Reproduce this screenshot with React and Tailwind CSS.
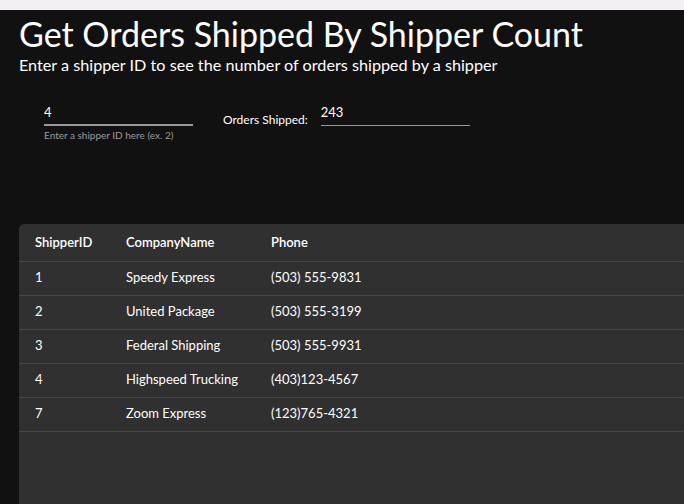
import React, { useState } from 'react';

const shippers = [
  { id: 1, name: 'Speedy Express', phone: '(503) 555-9831' },
  { id: 2, name: 'United Package', phone: '(503) 555-3199' },
  { id: 3, name: 'Federal Shipping', phone: '(503) 555-9931' },
  { id: 4, name: 'Highspeed Trucking', phone: '(403)123-4567' },
  { id: 7, name: 'Zoom Express', phone: '(123)765-4321' },
];

export default function App() {
  const [shipperId, setShipperId] = useState('4');

  return (
    <div className="h-[504px] w-[684px] overflow-hidden flex flex-col bg-[#111111] text-white font-['Lato','Open_Sans',sans-serif]">
      {/* browser strip */}
      <div className="h-[10px] bg-[#f3f0f3] shrink-0" />

      <div className="flex-1 flex flex-col pl-[19px]">
        <h1 className="text-[34px] leading-[38px] mt-[5px] font-normal">Get Orders Shipped By Shipper Count</h1>
        <p className="text-[16.2px] leading-[20px] mt-[2px]">Enter a shipper ID to see the number of orders shipped by a shipper</p>

        <div className="flex items-start mt-[29px] pl-[25px]">
          <div className="flex flex-col w-[149px]">
            <input
              value={shipperId}
              onChange={(e) => setShipperId(e.target.value)}
              className="bg-transparent outline-none text-[13px] leading-[15px] h-[22px] pb-[5px] border-b-2 border-[#999999] text-white"
            />
            <span className="text-[10px] leading-[12px] text-[#9a9a9a] mt-[3px]">Enter a shipper ID here (ex. 2)</span>
          </div>
          <div className="flex items-end ml-[30px]">
            <span className="text-[12px] leading-[14px] text-white mb-[-1px]">Orders Shipped:</span>
            <div className="ml-[13px] w-[149px] h-[22px] border-b border-[#999999] text-[13px] leading-[16px]">243</div>
          </div>
        </div>

        <div className="flex-1 mt-[83px] bg-[#303030] rounded-tl-[5px]">
          <table className="w-full text-[13px] border-collapse">
            <thead>
              <tr className="h-[37px] border-b border-[#474747]">
                <th className="text-left font-semibold pl-[16px] w-[107px]">ShipperID</th>
                <th className="text-left font-semibold w-[145px]">CompanyName</th>
                <th className="text-left font-semibold">Phone</th>
              </tr>
            </thead>
            <tbody>
              {shippers.map((s) => (
                <tr key={s.id} className="h-[34px] border-b border-[#474747]">
                  <td className="pl-[16px]">{s.id}</td>
                  <td>{s.name}</td>
                  <td>{s.phone}</td>
                </tr>
              ))}
            </tbody>
          </table>
        </div>
      </div>
    </div>
  );
}
